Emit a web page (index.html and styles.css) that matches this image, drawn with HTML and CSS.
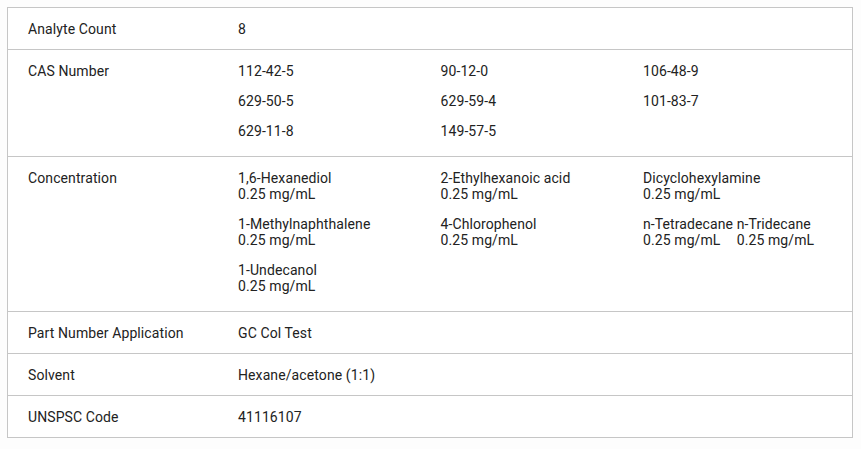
FILE: index.html
```html
<!DOCTYPE html>
<html lang="en">
<head>
<meta charset="utf-8">
<title>Specifications</title>
<link rel="stylesheet" href="styles.css">
</head>
<body>
<div class="specs">
  <div class="row">
    <div class="label">Analyte Count</div>
    <div class="value">8</div>
  </div>
  <div class="row multi">
    <div class="label">CAS Number</div>
    <div class="value grid cas">
      <div class="cell">112-42-5</div>
      <div class="cell">90-12-0</div>
      <div class="cell">106-48-9</div>
      <div class="cell">629-50-5</div>
      <div class="cell">629-59-4</div>
      <div class="cell">101-83-7</div>
      <div class="cell">629-11-8</div>
      <div class="cell">149-57-5</div>
    </div>
  </div>
  <div class="row multi">
    <div class="label">Concentration</div>
    <div class="value grid conc">
      <div class="cell"><span class="item"><span class="name">1,6-Hexanediol</span><span class="amt">0.25 mg/mL</span></span></div>
      <div class="cell"><span class="item"><span class="name">2-Ethylhexanoic acid</span><span class="amt">0.25 mg/mL</span></span></div>
      <div class="cell"><span class="item"><span class="name">Dicyclohexylamine</span><span class="amt">0.25 mg/mL</span></span></div>
      <div class="cell"><span class="item"><span class="name">1-Methylnaphthalene</span><span class="amt">0.25 mg/mL</span></span></div>
      <div class="cell"><span class="item"><span class="name">4-Chlorophenol</span><span class="amt">0.25 mg/mL</span></span></div>
      <div class="cell"><span class="item"><span class="name">n-Tetradecane</span><span class="amt">0.25 mg/mL</span></span> <span class="item"><span class="name">n-Tridecane</span><span class="amt">0.25 mg/mL</span></span></div>
      <div class="cell"><span class="item"><span class="name">1-Undecanol</span><span class="amt">0.25 mg/mL</span></span></div>
    </div>
  </div>
  <div class="row">
    <div class="label">Part Number Application</div>
    <div class="value">GC Col Test</div>
  </div>
  <div class="row">
    <div class="label">Solvent</div>
    <div class="value">Hexane/acetone (1:1)</div>
  </div>
  <div class="row">
    <div class="label">UNSPSC Code</div>
    <div class="value">41116107</div>
  </div>
</div>
</body>
</html>
```
FILE: styles.css
```css
html, body {
  margin: 0;
  padding: 0;
  background: #fdfdfd;
}
body {
  padding: 7px 8px 11px 7px;
  font-family: Roboto, "Liberation Sans", Arial, sans-serif;
  font-size: 14px;
  letter-spacing: 0.1px;
  color: #222222;
}
.specs {
  border: 1px solid #c6c6c6;
  background: #ffffff;
}
.row {
  display: flex;
  border-top: 1px solid #c6c6c6;
  padding: 13px 0 12px;
  line-height: 16px;
}
.row:first-child {
  border-top: 0;
}
.row.multi {
  padding: 13px 0 17px;
}
.label {
  width: 210px;
  padding-left: 20px;
  flex: none;
}
.value {
  flex: 1;
}
.grid {
  display: grid;
  grid-template-columns: 202.5px 202.5px 202.5px;
}
.cas {
  row-gap: 14px;
}
.conc {
  row-gap: 14px;
}
.item {
  display: inline-block;
  vertical-align: top;
}
.name, .amt {
  display: block;
}
```
